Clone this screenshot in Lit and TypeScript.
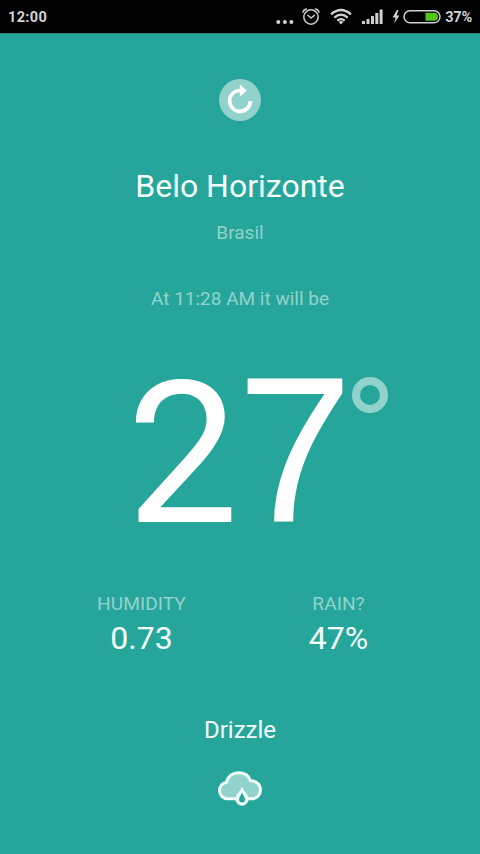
import { LitElement, html, css } from "lit";
import { customElement, property } from "lit/decorators.js";

@customElement("status-bar")
class StatusBar extends LitElement {
  static styles = css`
    :host { display: block; }
    .bar {
      box-sizing: border-box; height: 34px; padding: 0 8px; background: #000;
      border-bottom: 1px solid #3d7c76;
      display: flex; align-items: center; justify-content: space-between;
      font: 700 14.5px/33px Roboto, sans-serif; color: #d2d2d2;
    }
    .time, .percent { padding-top: 2px; }
    .time { letter-spacing: 0.35px; }
    .right { display: flex; align-items: center; }
    svg { display: block; }
    .dots { margin-right: 8px; }
    .alarm { margin-right: 10px; }
    .wifi { margin-right: 10px; }
    .signal { margin-right: 9px; }
    .bolt { margin-right: 3px; }
    .battery { margin-right: 4px; }
    .percent { letter-spacing: -0.2px; }
  `;
  render() {
    return html`
      <div class="bar">
        <span class="time">12:00</span>
        <div class="right">
          <svg class="dots" width="18" height="34" viewBox="0 0 18 34" fill="#d2d2d2">
            <circle cx="2.3" cy="22" r="2"/><circle cx="8.9" cy="22" r="2"/><circle cx="15.4" cy="22" r="2"/>
          </svg>
          <svg class="alarm" width="18" height="34" viewBox="0 0 18 34" fill="none" stroke="#cfcfcf" stroke-width="1.5" stroke-linecap="round" stroke-linejoin="round">
            <circle cx="9" cy="17" r="7.2"/><path d="M5.8 15.3L9 18l3.4-2.6M1 12.2Q1.6 9.5 4.4 8.9M17 12.2Q16.4 9.5 13.6 8.9"/>
          </svg>
          <svg class="wifi" width="22" height="34" viewBox="0 0 22 34" fill="none" stroke="#d2d2d2" stroke-width="2.2">
            <path d="M1 14.3Q11 5.7 21 14.3M4.3 17.6Q11 11.8 17.7 17.6M7.3 20.7Q11 17.5 14.7 20.7"/>
            <path d="M11 24.5L8.5 21.8Q11 20.2 13.5 21.8Z" fill="#d2d2d2" stroke="none"/>
          </svg>
          <svg class="signal" width="21" height="34" viewBox="0 0 21 34" fill="#cfcfcf">
            <path d="M0 21h3v3H0zM4.5 19h3v5h-3zM9 16h3v8H9zM13.3 13h3v11h-3zM17.6 9.5h3V24h-3z"/>
          </svg>
          <svg class="bolt" width="8" height="34" viewBox="0 0 8 34" fill="#d2d2d2">
            <path d="M5 10L0.5 17.6H3.6L2 23.5L7.5 15.5H4.6L6.5 10Z"/>
          </svg>
          <svg class="battery" width="38" height="34" viewBox="0 0 38 34">
            <rect x="1" y="10.7" width="36" height="12" rx="6" fill="none" stroke="#cfcfcf" stroke-width="1.5"/>
            <path d="M22.5 12.7H31a4 4 0 0 1 0 8H22.5Z" fill="#52c41a"/>
          </svg>
          <span class="percent">37%</span>
        </div>
      </div>
    `;
  }
}

@customElement("weather-stat")
class WeatherStat extends LitElement {
  @property() label = "";
  @property() value = "";
  static styles = css`
    :host { display: block; text-align: center; }
    .label { font-size: 19.2px; line-height: 24px; color: #92d2cc; }
    .value { margin-top: 2px; font-size: 32px; line-height: 40px; color: #f4fffd; }
  `;
  render() {
    return html`<div class="label">${this.label}</div><div class="value">${this.value}</div>`;
  }
}

@customElement("app-root")
class AppRoot extends LitElement {
  static styles = css`
    :host {
      display: block; height: 854px; overflow: hidden; background: #26a69a;
      font-family: Roboto, sans-serif; color: #f4fffd; text-align: center;
    }
    main { display: flex; flex-direction: column; align-items: center; }
    svg { display: block; }
    .refresh { margin-top: 45px; padding: 0; border: 0; background: none; }
    .city { margin-top: 45px; font-size: 32px; line-height: 40px; }
    .country { margin-top: 15px; font-size: 19px; line-height: 24px; color: #92d2cc; }
    .when { margin-top: 42px; font-size: 19px; line-height: 24px; color: #92d2cc; }
    .temp {
      position: relative; margin: 59px 5.5px 0 0; color: #fff;
      font-family: "Liberation Sans", sans-serif;
      font-size: 208px; line-height: 160px; letter-spacing: -5px;
    }
    .tens { font-family: Roboto, sans-serif; font-size: 199px; line-height: 0; letter-spacing: -1.6px; }
    .degree {
      position: absolute; left: 100%; top: 7px; margin-left: 4.5px;
      box-sizing: border-box; width: 36px; height: 36px;
      border: 8px solid #92d2cc; border-radius: 50%;
    }
    .stats { margin-top: 62px; display: grid; grid-template-columns: 197px 197px; }
    .summary { margin-top: 57px; font-size: 24px; line-height: 30px; }
    .cloud { margin-top: 26px; }
  `;
  render() {
    return html`
      <status-bar></status-bar>
      <main>
        <button class="refresh" aria-label="Refresh">
          <svg width="42" height="42" viewBox="0 0 42 42">
            <circle cx="21" cy="21" r="21" fill="#92d2cc"/>
            <path d="M21 11.5A10.4 10.4 0 1 0 31.4 22" fill="none" stroke="#fff" stroke-width="3.7"/>
            <path d="M20.8 5.2L27.7 11.5L20.8 17.8Z" fill="#fff"/>
          </svg>
        </button>
        <div class="city">Belo Horizonte</div>
        <div class="country">Brasil</div>
        <div class="when">At 11:28 AM it will be</div>
        <div class="temp"><span class="tens">2</span>7<span class="degree"></span></div>
        <div class="stats">
          <weather-stat label="HUMIDITY" value="0.73"></weather-stat>
          <weather-stat label="RAIN?" value="47%"></weather-stat>
        </div>
        <div class="summary">Drizzle</div>
        <svg class="cloud" width="44" height="35" viewBox="0 0 44 35">
          <path d="M10 27.8C5 27.8 1.5 24 1.5 19.5C1.5 14.8 5 11.8 8.3 11.6C9.5 5.5 14.5 1.7 20.5 1.7C26.5 1.7 31 5 32.5 9.8C38.5 9.6 42.5 13.8 42.5 18.8C42.5 24 38.5 27.8 34 27.8Z" fill="#92d2cc" stroke="#effffd" stroke-width="3"/>
          <path d="M24 16.5C25.5 21 30.2 23.5 30.2 28A6.2 6.2 0 0 1 17.8 28C17.8 23.5 22.5 21 24 16.5Z" fill="#effffd" stroke="#effffd" stroke-width="1" stroke-linejoin="round"/>
          <path d="M24 21.5C25 24.5 27 26 27 28.5A3 3 0 0 1 21 28.5C21 26 23 24.5 24 21.5Z" fill="#26a69a"/>
        </svg>
      </main>
    `;
  }
}
